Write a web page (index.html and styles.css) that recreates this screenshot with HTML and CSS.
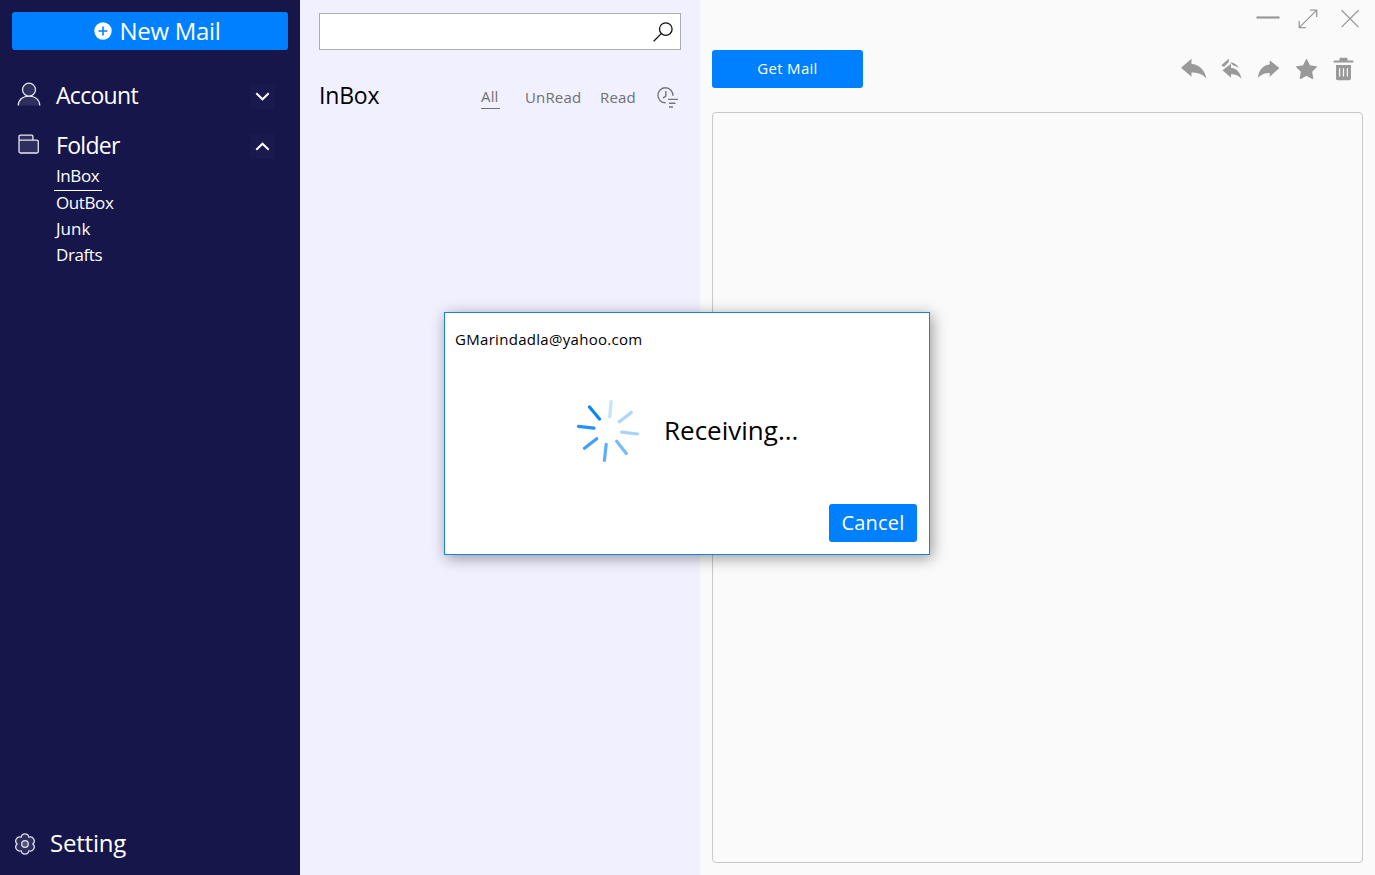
FILE: index.html
```html
<!DOCTYPE html>
<html lang="en">
<head>
    <meta charset="UTF-8">
    <meta name="viewport" content="width=device-width, initial-scale=1.0">
    <title>Mail</title>
    <link rel="stylesheet" href="styles.css">
</head>
<body>
    <div class="app">
        <aside class="sidebar">
            <button class="btn new-mail">
                <svg width="18" height="18" viewBox="0 0 18 18"><circle cx="9" cy="9" r="8.7" fill="#fff"/><path d="M9 4.5v9M4.5 9h9" stroke="#0080ff" stroke-width="1.6"/></svg>
                <span>New Mail</span>
            </button>
            <div class="nav-row account">
                <svg class="nav-icon" width="24" height="26" viewBox="0 0 24 26" fill="#2e2e5f" stroke="#e8e8f0" stroke-width="1.3"><path d="M1.2 24.5C1.4 18.5 6 15.2 12 15.2S22.400 18.500 22.800 24.500"/><circle cx="12" cy="8.700" r="6.500"/></svg>
                <span class="nav-label">Account</span>
                <span class="toggle"><svg width="15" height="9" viewBox="0 0 15 9"><path d="M1.300 1.300l6.200 6 6.200-6"/></svg></span>
            </div>
            <div class="nav-row folder">
                <svg class="nav-icon" width="24" height="26" viewBox="0 0 24 26" fill="#2e2e5f" stroke="#e8e8f0" stroke-width="1.3"><path d="M2 9.500V5.800q0-1.700 1.700-1.700h11q1.200 0 1.200 1.200V9"/><rect x="2" y="9.100" width="19.300" height="12.900" rx="1.500"/></svg>
                <span class="nav-label">Folder</span>
                <span class="toggle"><svg width="15" height="9" viewBox="0 0 15 9"><path d="M1.300 7.700l6.200-6 6.200 6"/></svg></span>
            </div>
            <ul class="folders">
                <li class="active"><span class="f-inbox">InBox</span></li>
                <li><span class="f-outbox">OutBox</span></li>
                <li><span class="f-junk">Junk</span></li>
                <li><span class="f-drafts">Drafts</span></li>
            </ul>
            <div class="setting">
                <svg width="22" height="22" viewBox="0 0 22 22" fill="#2e2e5f" stroke="#e0e0ec" stroke-width="1.3" stroke-linejoin="round"><path d="M18.800 11A3.950 3.950 0 0 1 14.900 17.750A3.950 3.950 0 0 1 7.100 17.750A3.950 3.950 0 0 1 3.200 11A3.950 3.950 0 0 1 7.100 4.250A3.950 3.950 0 0 1 14.900 4.250A3.950 3.950 0 0 1 18.800 11z"/><circle cx="11" cy="11" r="3.300" fill="#55557d"/></svg>
                <span>Setting</span>
            </div>
        </aside>
        <section class="mail-list">
            <div class="search">
                <svg width="20" height="20" viewBox="0 0 20 20" fill="none" stroke="#111" stroke-width="1.300"><circle cx="12.800" cy="7.100" r="6.300"/><path d="M8.200 11.600L.7 19.200"/></svg>
            </div>
            <div class="list-head">
                <h1>InBox</h1>
                <nav class="tabs">
                    <span class="tab-all">All</span>
                    <span class="tab-unread">UnRead</span>
                    <span class="tab-read">Read</span>
                </nav>
                <svg class="sort" width="22" height="22" viewBox="0 0 22 22" fill="none" stroke="#777" stroke-width="1.400"><path d="M8.700 15.800A7.500 7.500 0 1 1 15.900 8.700M8.800 4v5.200L6 11.100M11 12.400h10M12 16.200h6.500M12 20h4"/></svg>
            </div>
        </section>
        <main class="reader">
            <div class="window-controls">
                <svg width="24" height="20" viewBox="0 0 24 20"><path class="minimize" d="M.5 8.500h23"/></svg>
                <svg width="20" height="20" viewBox="0 0 20 20"><path d="M1.200 18.600L18.500 1.400M12 1.200h6.700v6.700M1.200 12v6.700h6.700"/></svg>
                <svg width="18" height="20" viewBox="0 0 18 20"><path d="M.5 1.300l17 16.800M17.500 1.300L.5 18.100"/></svg>
            </div>
            <div class="toolbar">
                <button class="btn get-mail"><span>Get Mail</span></button>
                <div class="actions">
                    <svg width="26" height="26" viewBox="0 0 26 26"><path d="M0 10.800L10.500 1.800V7C17.500 7.400 23 11.500 25.500 21.600 21 17 16.500 15.600 10.500 15.600v4.200z"/></svg>
                    <svg width="26" height="26" viewBox="0 0 26 26"><path d="M3.500 13.300L12 6.700v4.100c5 .4 9 4 10.500 10.800C19 18 16 17.200 12 17.200v3.600z"/><path d="M2.300 8.200L9.800 1.800V4.900L5 9.900zM11 5.300c4 .5 7 2.100 8.800 5.200l-5.800-2.300-1.800-1.600z"/></svg>
                    <svg width="26" height="26" viewBox="0 0 26 26"><path d="M23.400 11L13.700 3.300v4.200C7.500 8 3 12.500 1.900 20.800c4-3.700 7.300-4.900 11.800-4.800v3.900z"/></svg>
                    <svg width="26" height="26" viewBox="0 0 26 26"><path d="M12.500 2.800l3 6.100 6.800 1-4.800 4.700 1.100 6.700-6.100-3.200-6.100 3.200 1.100-6.700-4.800-4.700 6.800-1z" stroke="#999" stroke-width="1.300" stroke-linejoin="round"/></svg>
                    <svg width="26" height="26" viewBox="0 0 26 26"><path d="M8.500 3.600V1.500q0-.7.7-.7h6.600q.7 0 .7.700v2.100h5q1 0 1 1v1h-20v-1q0-1 1-1zM5 7.900h15v13.700q0 1.700-1.700 1.700H6.700Q5 23.300 5 21.600z"/><path d="M8.600 11.300v8.200M12.500 11.300v8.200M16.400 11.300v8.200" stroke="#fafafa" stroke-width="1.200"/></svg>
                </div>
            </div>
            <div class="message"></div>
        </main>
    </div>
    <div class="dialog">
        <p class="address">GMarindadla@yahoo.com</p>
        <div class="progress">
            <svg width="64" height="64" viewBox="-32 -32 64 64" stroke="#0080f5" stroke-width="3.200" stroke-linecap="round">
                <path d="M1.700-14L3.100-29.500" opacity=".22"/>
                <path d="M11.300-9.300L23.300-18.500" opacity=".32"/>
                <path d="M13.700 1.200L29.500 3" opacity=".34"/>
                <path d="M8.700 10.300L18.300 22.500" opacity=".53"/>
                <path d="M-1.800 13.300L-3.600 29.500" opacity=".63"/>
                <path d="M-11.300 7.800L-23.500 17.300" opacity=".75"/>
                <path d="M-14-2.800L-29.500-4.600" opacity=".85"/>
                <path d="M-8.500-12L-18.500-24" opacity=".95"/>
            </svg>
            <span>Receiving...</span>
        </div>
        <button class="btn cancel"><span>Cancel</span></button>
    </div>
</body>
</html>
```
FILE: styles.css
```css
* {
    box-sizing: border-box;
}
body {
    margin: 0;
    font-family: "Open Sans", "Noto Sans", sans-serif;
    color: #000;
    overflow: hidden;
}
svg {
    display: block;
    flex: none;
}
.app {
    display: flex;
    height: 875px;
}
.btn {
    display: flex;
    align-items: center;
    justify-content: center;
    padding: 0 0 2px;
    border: none;
    border-radius: 3px;
    background: #0080ff;
    color: #fff;
    font-family: inherit;
}

/* sidebar */
.sidebar {
    width: 300px;
    flex: none;
    display: flex;
    flex-direction: column;
    background: #17164b;
    color: #fff;
    padding: 12px;
}
.new-mail {
    width: 276px;
    height: 38px;
    padding-left: 15px;
    gap: 7px;
    font-size: 24px;
    letter-spacing: -0.3px;
}
.new-mail svg {
    margin-top: 2px;
}
.nav-row {
    display: flex;
    align-items: center;
    height: 50px;
    padding: 0 13px 0 5px;
    font-size: 23px;
    letter-spacing: -0.7px;
}
.account {
    margin-top: 21px;
}
.nav-icon {
    margin-bottom: 4px;
}
.nav-label {
    flex: 1;
    margin: 0 0 2px 15px;
}
.toggle {
    display: flex;
    align-items: center;
    justify-content: center;
    width: 25px;
    height: 25px;
    margin-top: 1px;
    background: #1a194e;
}
.toggle path {
    fill: none;
    stroke: #fff;
    stroke-width: 2;
}
.folders {
    list-style: none;
    margin: -7px 0 0 42px;
    padding: 0;
    font-size: 17px;
    line-height: 24px;
    letter-spacing: -0.4px;
}
.folders li {
    width: max-content;
    height: 26px;
    padding: 0 2px;
}
.folders .active {
    width: 48px;
    height: 27px;
    border-bottom: 1px solid #fff;
}
.folders .f-junk {
    letter-spacing: 0;
}
.setting {
    display: flex;
    align-items: center;
    gap: 14px;
    height: 38px;
    margin-top: auto;
    padding-left: 2px;
    font-size: 24px;
    letter-spacing: -0.2px;
}
.setting span {
    margin-bottom: 3px;
}

/* mail list */
.mail-list {
    width: 400px;
    flex: none;
    padding: 13px 19px;
    background: #f1f0ff;
}
.search {
    display: flex;
    align-items: center;
    justify-content: flex-end;
    width: 362px;
    height: 37px;
    padding-right: 7px;
    border: 1px solid #abadb3;
    background: #fff;
}
.list-head {
    display: flex;
    align-items: center;
    height: 50px;
    margin-top: 21px;
}
h1 {
    width: 162px;
    margin: 0 0 2px;
    font-size: 23px;
    font-weight: normal;
    letter-spacing: -0.2px;
}
.tabs {
    display: flex;
    width: 176px;
    margin-top: 1px;
    font-size: 15px;
    line-height: 24px;
    letter-spacing: 0.15px;
    color: #707070;
}
.tab-all {
    width: 19px;
    margin-right: 25px;
    line-height: 23px;
    border-bottom: 1px solid #707070;
}
.tab-unread {
    width: 75px;
}
.sort {
    margin-top: 3px;
}

/* reader */
.reader {
    flex: 1;
    display: flex;
    flex-direction: column;
    background: #fafafa;
    padding: 9px 12px 12px;
}
.window-controls {
    display: flex;
    justify-content: flex-end;
    gap: 18px;
    height: 41px;
    padding-right: 4px;
}
.window-controls svg:last-child {
    margin-left: 5px;
}
.window-controls path {
    fill: none;
    stroke: #999;
    stroke-width: 1.3;
}
.window-controls .minimize {
    stroke-width: 2.2;
}
.toolbar {
    display: flex;
    justify-content: space-between;
    height: 62px;
}
.get-mail {
    width: 151px;
    height: 38px;
    font-size: 15px;
    letter-spacing: 0.3px;
}
.actions {
    display: flex;
    gap: 11.5px;
    padding: 7px 6px 0 0;
    fill: #999;
}
.message {
    flex: 1;
    border: 1px solid #c8c8c8;
    border-radius: 4px;
}

/* progress dialog, over the whole window */
.dialog {
    position: absolute;
    left: 444px;
    top: 312px;
    width: 486px;
    height: 243px;
    display: flex;
    flex-direction: column;
    padding: 15px 12px 12px 10px;
    border: 1px solid #1883d7;
    background: #fff;
    box-shadow: 2px 3px 14px rgba(0, 0, 0, 0.4);
}
.address {
    margin: 0;
    font-size: 15px;
    line-height: 22px;
    letter-spacing: 0.3px;
}
.progress {
    display: flex;
    align-items: center;
    gap: 24px;
    margin: 49px 0 0 121px;
    font-size: 26px;
    line-height: 62px;
}
.progress span {
    padding-bottom: 2px;
}
.cancel {
    width: 88px;
    height: 38px;
    margin: auto 0 0 auto;
    font-size: 20px;
    letter-spacing: 0.2px;
}
```
